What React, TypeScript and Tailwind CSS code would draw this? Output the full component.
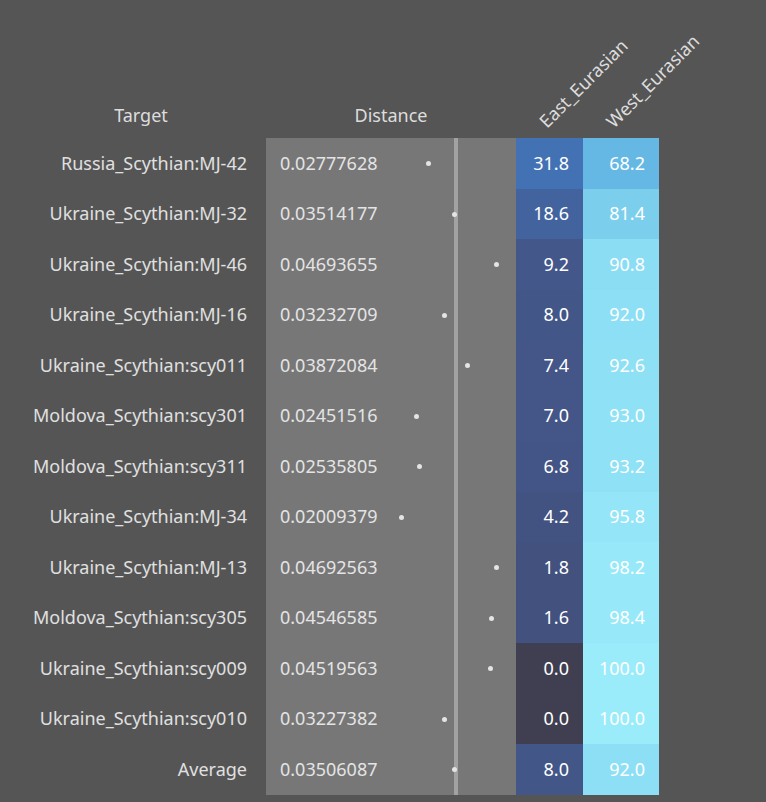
const rows: [string, number, number, number][] = [
  ["Russia_Scythian:MJ-42", 0.02777628, 31.8, 68.2],
  ["Ukraine_Scythian:MJ-32", 0.03514177, 18.6, 81.4],
  ["Ukraine_Scythian:MJ-46", 0.04693655, 9.2, 90.8],
  ["Ukraine_Scythian:MJ-16", 0.03232709, 8.0, 92.0],
  ["Ukraine_Scythian:scy011", 0.03872084, 7.4, 92.6],
  ["Moldova_Scythian:scy301", 0.02451516, 7.0, 93.0],
  ["Moldova_Scythian:scy311", 0.02535805, 6.8, 93.2],
  ["Ukraine_Scythian:MJ-34", 0.02009379, 4.2, 95.8],
  ["Ukraine_Scythian:MJ-13", 0.04692563, 1.8, 98.2],
  ["Moldova_Scythian:scy305", 0.04546585, 1.6, 98.4],
  ["Ukraine_Scythian:scy009", 0.04519563, 0.0, 100.0],
  ["Ukraine_Scythian:scy010", 0.03227382, 0.0, 100.0],
  ["Average", 0.03506087, 8.0, 92.0],
];

function mix(a: number[], b: number[], t: number) {
  t = Math.max(0, Math.min(1, t));
  return `rgb(${a.map((v, i) => Math.round(v + (b[i] - v) * t)).join(",")})`;
}

function eastColor(v: number) {
  if (v <= 0) return "rgb(64,63,82)";
  if (v < 10) return mix([66, 80, 122], [67, 88, 140], v / 10);
  return mix([67, 90, 145], [67, 114, 180], (v - 10) / 22);
}

function westColor(v: number) {
  return mix([102, 184, 228], [154, 236, 250], (v - 68) / 32);
}

export default function App() {
  return (
    <div className="w-[766px] h-[802px] bg-[#555555] text-[#e6e6e6] font-['Liberation_Sans'] text-[18px] overflow-hidden">
      <div className="flex h-[138px] items-end">
        <div className="w-[266px] pb-[9px] text-center pl-[16px] text-[#dddddd]">Target</div>
        <div className="w-[250px] pb-[9px] text-center text-[#dddddd]">Distance</div>
        <div className="w-[67px] h-full relative">
          <span className="absolute left-[36px] bottom-[4px] origin-bottom-left -rotate-45 whitespace-nowrap text-[#dddddd]">East_Eurasian</span>
        </div>
        <div className="w-[76px] h-full relative">
          <span className="absolute left-[36px] bottom-[4px] origin-bottom-left -rotate-45 whitespace-nowrap text-[#dddddd]">West_Eurasian</span>
        </div>
      </div>
      <div className="flex flex-col">
        {rows.map(([name, d, e, w]) => (
          <div key={name} className="flex h-[50.5px]">
            <div className="w-[266px] pr-[19px] flex items-center justify-end text-[#e0e0e0]">{name}</div>
            <div className="w-[250px] bg-[#777777] relative flex items-center pl-[14px] text-[#e4e4e4]">
              {d.toFixed(8)}
              <div className="absolute left-[188px] top-0 bottom-0 w-[4px] bg-[#a2a2a2]" />
              <div
                className="absolute top-1/2 w-[5px] h-[5px] -mt-[2px] -ml-[2px] rounded-full bg-[#e4e4e4]"
                style={{ left: 188 + (d - 0.03506087) * 3560 }}
              />
            </div>
            <div className="w-[67px] flex items-center justify-end pr-[14px] text-white" style={{ background: eastColor(e) }}>
              {e.toFixed(1)}
            </div>
            <div className="w-[76px] flex items-center justify-end pr-[14px] text-white" style={{ background: westColor(w) }}>
              {w.toFixed(1)}
            </div>
          </div>
        ))}
      </div>
    </div>
  );
}
